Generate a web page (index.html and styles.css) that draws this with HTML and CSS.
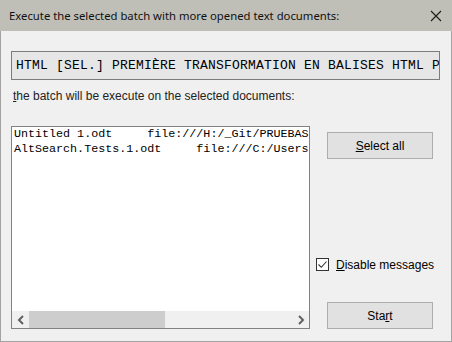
FILE: index.html
```html
<!DOCTYPE html>
<html lang="en">
<head>
    <meta charset="UTF-8">
    <meta name="viewport" content="width=device-width, initial-scale=1.0">
    <title>Execute batch</title>
    <link rel="stylesheet" href="styles.css">
</head>
<body>
    <div class="dialog">
        <div class="titlebar">
            <span class="title">Execute the selected batch with more opened text documents:</span>
            <svg class="close" width="12" height="12" viewBox="0 0 12 12">
                <path d="M1 1 L11 11 M11 1 L1 11" stroke="#1a1a1a" stroke-width="1.1" fill="none"/>
            </svg>
        </div>

        <div class="content">
            <!-- selected batch -->
            <div class="batch-name">HTML [SEL.] PREMIÈRE TRANSFORMATION EN BALISES HTML P</div>

            <p class="hint"><span class="key">t</span>he batch will be execute on the selected documents:</p>

            <div class="main">
                <div class="doc-list">
                    <div class="doc-items">
                        <div class="doc">Untitled 1.odt     file:///H:/_Git/PRUEBAS</div>
                        <div class="doc">AltSearch.Tests.1.odt     file:///C:/Users</div>
                    </div>
                    <div class="hscroll">
                        <span class="arrow">
                            <svg width="8" height="10" viewBox="0 0 8 10"><path d="M6 1 L2 5 L6 9" stroke="#606060" stroke-width="2" fill="none"/></svg>
                        </span>
                        <div class="track"><div class="thumb"></div></div>
                        <span class="arrow">
                            <svg width="8" height="10" viewBox="0 0 8 10"><path d="M2 1 L6 5 L2 9" stroke="#606060" stroke-width="2" fill="none"/></svg>
                        </span>
                    </div>
                </div>

                <div class="side">
                    <button class="btn"><span class="key">S</span>elect all</button>
                    <label class="check">
                        <span class="box">
                            <svg width="11" height="11" viewBox="0 0 11 11"><path d="M1.5 5.5 L4.3 8.3 L9.5 2.5" stroke="#333" stroke-width="1.1" fill="none"/></svg>
                        </span>
                        <span><span class="key">D</span>isable messages</span>
                    </label>
                    <button class="btn">Sta<span class="key">r</span>t</button>
                </div>
            </div>
        </div>
    </div>
</body>
</html>
```

FILE: styles.css
```css
html, body {
    margin: 0;
    padding: 0;
}
body {
    width: 452px;
    height: 342px;
    overflow: hidden;
    font-family: "Liberation Sans", Arial, sans-serif;
    font-size: 12px;
    color: #000;
}
.dialog {
    width: 450px;
    height: 341px;
    background: #f0f0f0;
    border: 1px solid #a3a3a3;
    border-top: none;
}
.titlebar {
    height: 31px;
    margin: 0 -1px;
    background: #c0bfb7;
    display: flex;
    align-items: center;
    justify-content: space-between;
    padding: 0 10px 0 9px;
}
.title {
    font-family: "Noto Sans", sans-serif;
    font-size: 11.3px;
    color: #111;
    padding-bottom: 1px;
}
.close {
    display: block;
}
.content {
    padding: 20px 11px 0 10px;
}
.batch-name {
    height: 27px;
    border: 1px solid #7c7c7c;
    background: #e6e6e6;
    font-family: "Liberation Mono", monospace;
    font-size: 13px;
    letter-spacing: 0.2px;
    line-height: 27px;
    padding-left: 4px;
    white-space: pre;
    overflow: hidden;
}
.hint {
    margin: 8px 0 0 2px;
    color: #222;
    line-height: 16px;
}
.key {
    text-decoration: underline;
}
.main {
    display: flex;
    gap: 17px;
    margin-top: 22px;
}
.doc-list {
    width: 297px;
    height: 201px;
    border: 1px solid #828282;
    background: #fff;
    display: flex;
    flex-direction: column;
}
.doc-items {
    flex: 1;
    overflow: hidden;
    padding: 0 0 0 2px;
}
.doc {
    font-family: "Liberation Mono", monospace;
    font-size: 11.7px;
    line-height: 15px;
    white-space: pre;
}
.hscroll {
    height: 17px;
    background: #f0f0f0;
    display: flex;
}
.arrow {
    width: 17px;
    display: flex;
    align-items: center;
    justify-content: center;
}
.track {
    flex: 1;
}
.thumb {
    width: 136px;
    height: 17px;
    background: #cdcdcd;
}
.side {
    display: flex;
    flex-direction: column;
    padding-top: 6px;
}
.btn {
    width: 106px;
    height: 27px;
    background: #e1e1e1;
    border: 1px solid #adadad;
    font-family: "Liberation Sans", Arial, sans-serif;
    font-size: 12px;
    color: #000;
    padding: 0;
}
.check {
    display: flex;
    align-items: center;
    gap: 7px;
    margin: auto 0 31px -11px;
    height: 13px;
    font-size: 12px;
}
.box {
    width: 11px;
    height: 11px;
    border: 1px solid #333;
    background: #fff;
    display: flex;
}
```
